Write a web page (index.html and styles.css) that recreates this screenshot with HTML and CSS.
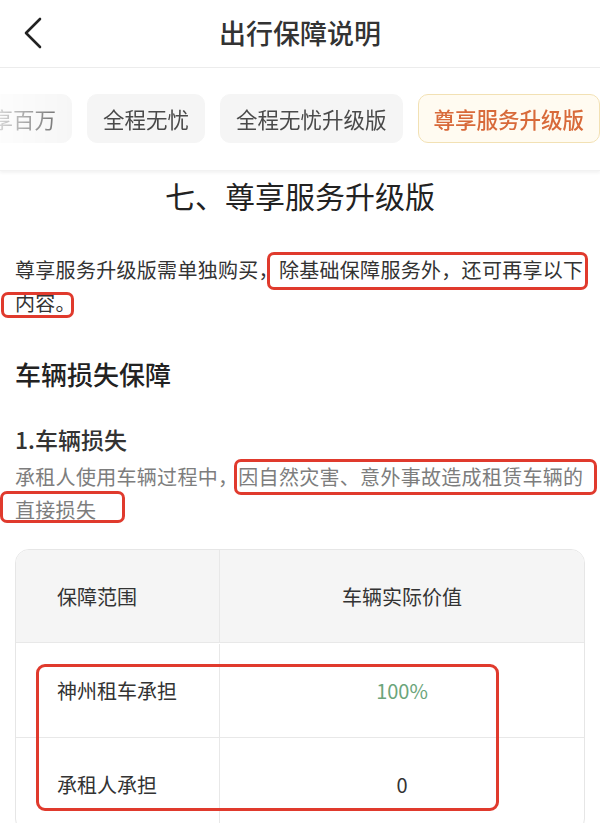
FILE: index.html
```html
<!DOCTYPE html>
<html lang="zh-CN">
<head>
    <meta charset="UTF-8">
    <title>出行保障说明</title>
    <link rel="stylesheet" href="styles.css">
</head>
<body>
<div class="nav">
    <div class="back">
        <svg width="20" height="32" viewBox="0 0 20 32">
            <path d="M17 2 L3 16 L17 30" fill="none" stroke="#222" stroke-width="2.6" stroke-linecap="round" stroke-linejoin="round"/>
        </svg>
    </div>
    <div class="nav-title">出行保障说明</div>
    <div></div>
</div>

<div class="tabs">
    <div class="tabs-inner">
        <div class="tab">尊享百万</div>
        <div class="tab">全程无忧</div>
        <div class="tab">全程无忧升级版</div>
        <div class="tab active">尊享服务升级版</div>
    </div>
</div>

<div class="content">
    <h1 class="title">七、尊享服务升级版</h1>

    <p class="text">
        尊享服务升级版需单独购买，除基础保障服务外，还可再享以下<br>内容。
        <span class="mark mark-1"></span>
        <span class="mark mark-2"></span>
    </p>

    <h2 class="section">车辆损失保障</h2>

    <h3 class="sub">1.车辆损失</h3>
    <p class="text gray">
        承租人使用车辆过程中，因自然灾害、意外事故造成租赁车辆的<br>直接损失
        <span class="mark mark-3"></span>
        <span class="mark mark-4"></span>
    </p>

    <div class="table-wrap">
        <div class="table">
            <div class="cell head">保障范围</div>
            <div class="cell head center">车辆实际价值</div>
            <div class="cell">神州租车承担</div>
            <div class="cell center green">100%</div>
            <div class="cell">承租人承担</div>
            <div class="cell center">0</div>
        </div>
        <span class="mark mark-5"></span>
    </div>
</div>
</body>
</html>
```

FILE: styles.css
```css
* {
    box-sizing: border-box;
}

body {
    margin: 0;
    height: 823px;
    overflow: hidden;
    background: #fff;
    font-family: "Noto Sans CJK SC", "Noto Sans", sans-serif;
    color: #333;
}

.nav {
    display: grid;
    grid-template-columns: 80px 1fr 80px;
    align-items: center;
    height: 68px;
    border-bottom: 1px solid #ececec;
}

.back {
    display: flex;
    align-items: center;
    padding-left: 23px;
    padding-bottom: 2px;
}

.nav-title {
    text-align: center;
    font-size: 27px;
    font-weight: 500;
    color: #333;
    line-height: 36px;
    padding-bottom: 2px;
}

.tabs {
    height: 103px;
    padding-top: 26px;
    overflow: hidden;
    box-shadow: 0 2px 3px rgba(0, 0, 0, 0.05);
    border-bottom: 1px solid #f2f2f2;
}

.tabs-inner {
    display: flex;
    gap: 15px;
    margin-left: -46px;
    -webkit-mask-image: linear-gradient(to right, transparent 20px, #000 130px);
    mask-image: linear-gradient(to right, transparent 20px, #000 130px);
}

.tab {
    flex: none;
    height: 49px;
    padding: 0 15px;
    display: flex;
    align-items: center;
    font-size: 21.5px;
    color: #4a4a4a;
    background: #f5f5f5;
    border: 1px solid #f5f5f5;
    border-radius: 10px;
    white-space: nowrap;
}

.tab.active {
    background: #fffbf1;
    border-color: #f2e1b4;
    color: #d86a3a;
    font-weight: 500;
}

.content {
    padding: 0 15px;
}

.title {
    margin: 4px 0 0;
    text-align: center;
    font-size: 30px;
    font-weight: 400;
    line-height: 40px;
    color: #222;
}

.text {
    position: relative;
    margin: 38px 0 0;
    font-size: 20px;
    letter-spacing: 0.3px;
    line-height: 33px;
    color: #333;
    white-space: nowrap;
}

.text.gray {
    margin-top: 5px;
    color: #7d7d7d;
    text-spacing-trim: space-all;
}

.section {
    margin: 37px 0 0;
    font-size: 26px;
    font-weight: 500;
    line-height: 36px;
    color: #222;
}

.sub {
    margin: 31px 0 0;
    font-size: 23px;
    font-weight: 500;
    line-height: 32px;
    color: #333;
}

.table-wrap {
    position: relative;
    margin-top: 23px;
}

.table {
    display: grid;
    grid-template-columns: 204px 1fr;
    grid-auto-rows: 94px;
    border: 1px solid #e6e6e6;
    border-radius: 14px;
    overflow: hidden;
}

.cell {
    display: flex;
    align-items: center;
    padding-left: 41px;
    font-size: 20px;
    color: #333;
    border-bottom: 1px solid #e8e8e8;
}

.cell:nth-child(odd) {
    border-right: 1px solid #e8e8e8;
}

.cell.head {
    background: #f5f5f5;
    height: 93px;
}

.cell.center {
    justify-content: center;
    padding-left: 0;
}

.cell.green {
    color: #6ba57b;
}

.mark {
    position: absolute;
    border: 3px solid #e03a2d;
    border-radius: 7px;
}

.mark-1 {
    left: 252px;
    top: -1px;
    width: 321px;
    height: 38px;
}

.mark-2 {
    left: -14px;
    top: 39px;
    width: 73px;
    height: 26px;
}

.mark-3 {
    left: 219px;
    top: -1px;
    width: 363px;
    height: 36px;
}

.mark-4 {
    left: -15px;
    top: 31px;
    width: 125px;
    height: 32px;
}

.mark-5 {
    left: 21px;
    top: 115px;
    width: 463px;
    height: 147px;
    border-radius: 9px;
}
```
